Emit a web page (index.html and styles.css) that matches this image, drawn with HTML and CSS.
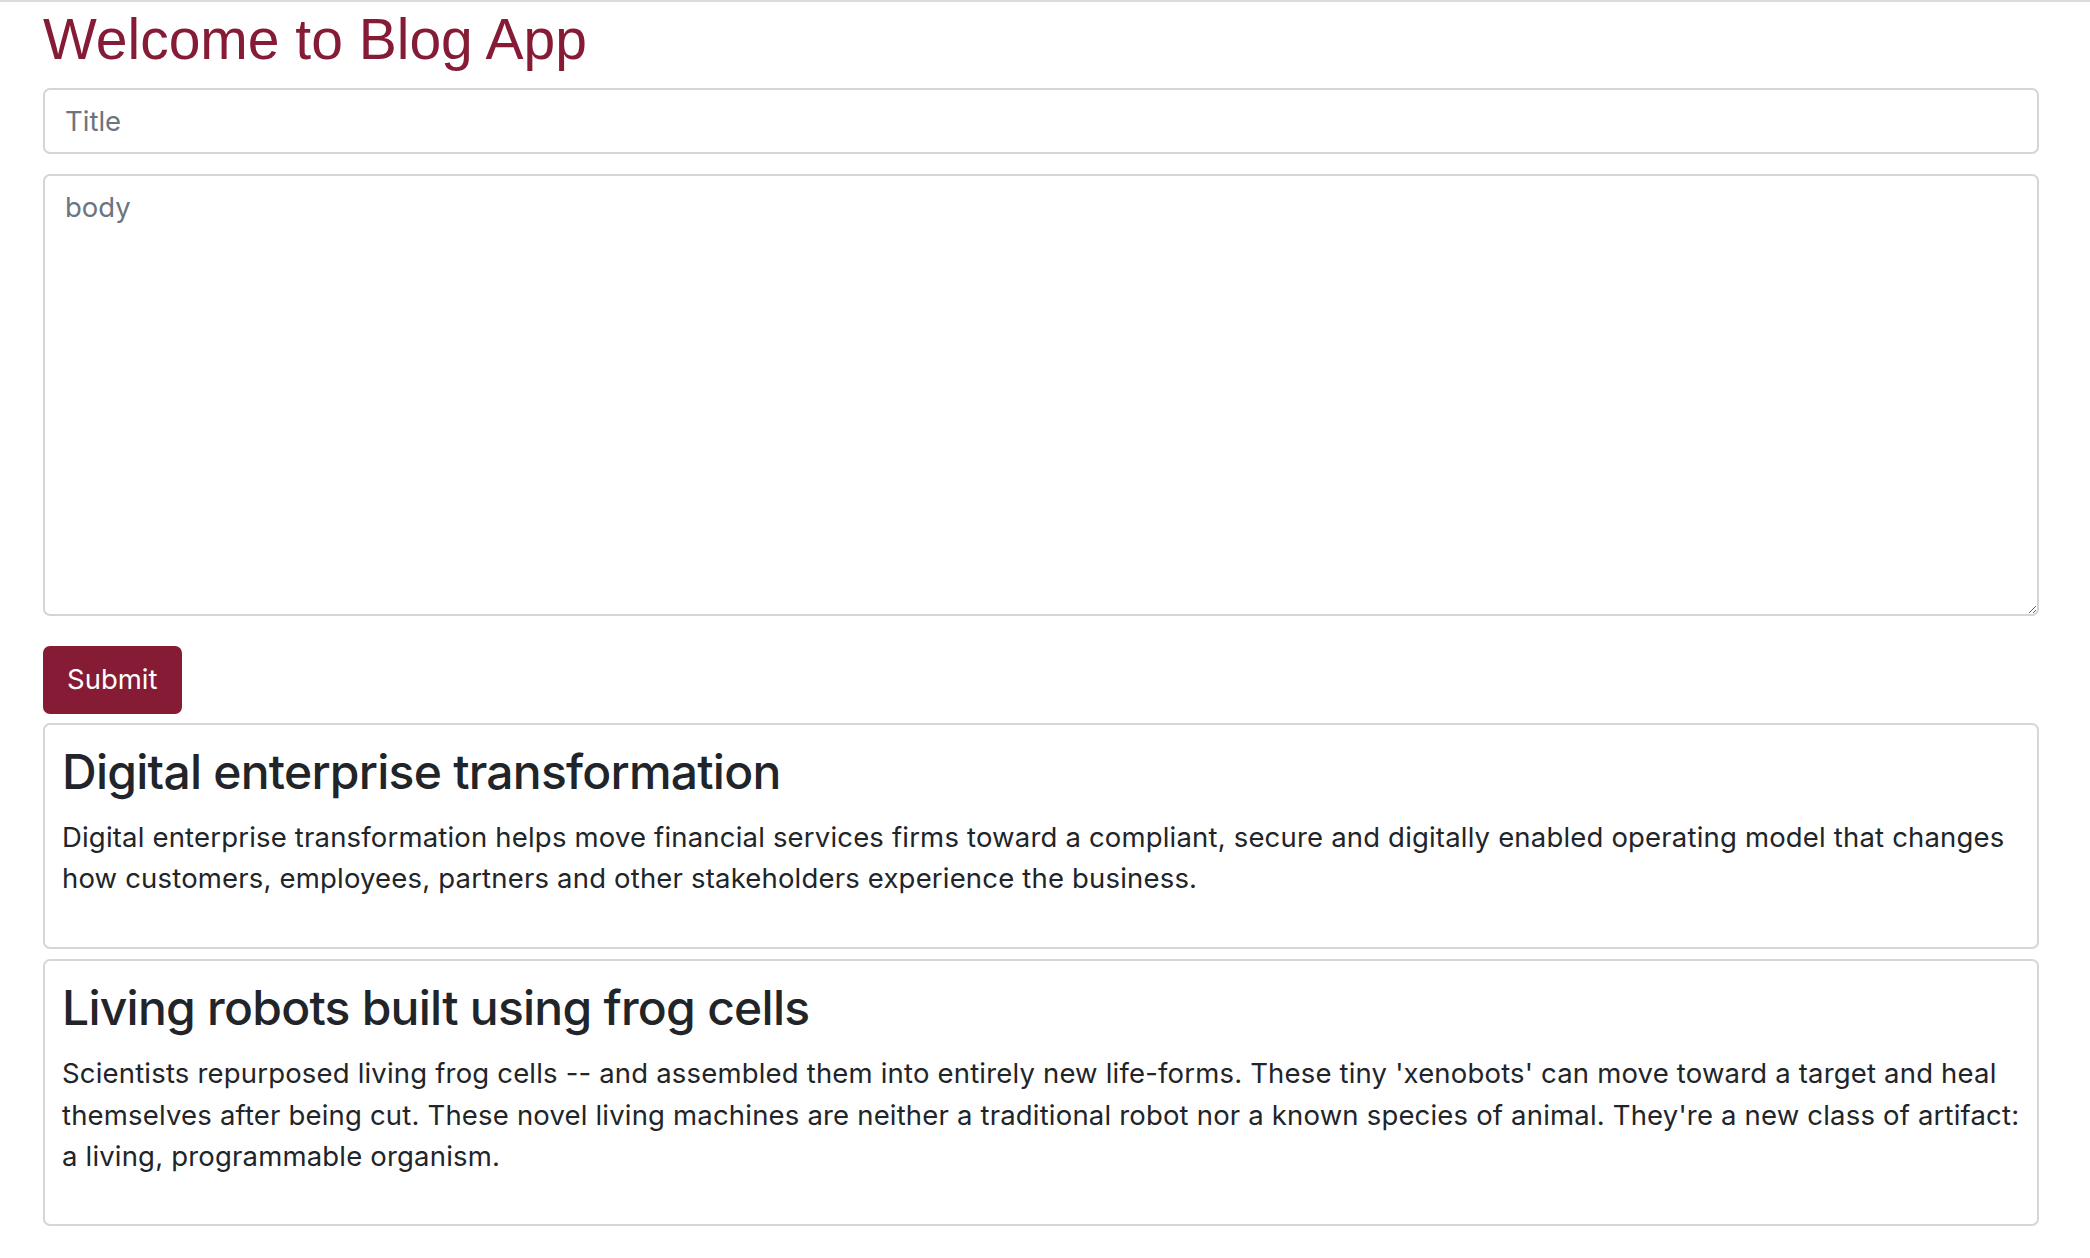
FILE: index.html
```html
<!DOCTYPE html>
<html lang="en">
<head>
  <meta charset="utf-8" />
  <meta name="viewport" content="width=device-width, initial-scale=1.0" />
  <title>Blog App</title>
  <link rel="stylesheet" href="styles.css">
</head>

<body>
  <div class="container">
    <h2 class="app-title">Welcome to Blog App</h2>

    <form class="post-form">
      <input type="text" class="form-control" name="title" placeholder="Title" />
      <textarea class="form-control body-input" name="body" placeholder="body"></textarea>
      <button type="button" class="btn-submit">Submit</button>
    </form>

    <div class="posts">
      <div class="card">
        <h3 class="card-title">Digital enterprise transformation</h3>
        <p class="card-text">Digital enterprise transformation helps move financial services firms toward a compliant, secure and digitally enabled operating model that changes how customers, employees, partners and other stakeholders experience the business.</p>
      </div>

      <div class="card">
        <h3 class="card-title">Living robots built using frog cells</h3>
        <p class="card-text">Scientists repurposed living frog cells -- and assembled them into entirely new life-forms. These tiny 'xenobots' can move toward a target and heal themselves after being cut. These novel living machines are neither a traditional robot nor a known species of animal. They're a new class of artifact: a living, programmable organism.</p>
      </div>
    </div>
  </div>
</body>
</html>
```

FILE: styles.css
```css
* {
  box-sizing: border-box;
}

body {
  margin: 0;
  border-top: 2px solid #dcdce0;
  font-family: Inter, "Noto Sans", sans-serif;
  font-size: 27.5px;
  line-height: 1.5;
  color: #212529;
  background: #fff;
}

.container {
  padding: 3px 51px 0 43px;
}

.app-title {
  margin: 0 0 15px;
  font-family: "Liberation Sans", Arial, sans-serif;
  font-size: 57px;
  font-weight: 400;
  line-height: 1.2;
  color: #861b36;
}

.form-control {
  display: block;
  width: 100%;
  height: 66px;
  padding: 11px 20px;
  font-family: inherit;
  font-size: 27.5px;
  line-height: 1.5;
  color: #495057;
  background: #fff;
  border: 2px solid #d2d5d9;
  border-radius: 7px;
}

.form-control::placeholder {
  color: #6c757d;
}

.body-input {
  height: 442px;
  margin-top: 20px;
  resize: vertical;
}

.btn-submit {
  display: block;
  margin-top: 30px;
  padding: 11px 22px;
  font-family: inherit;
  font-size: 27.5px;
  line-height: 1.5;
  color: #fff;
  background: #861b36;
  border: 2px solid #861b36;
  border-radius: 7px;
}

.posts {
  margin-top: 9px;
}

.card {
  margin-bottom: 10px;
  padding: 18px 8px 20px 17px;
  border: 2px solid #d6d6d6;
  border-radius: 7px;
}

.card-title {
  margin: 0 0 17px;
  font-size: 48px;
  font-weight: 500;
  line-height: 1.2;
  letter-spacing: -0.75px;
}

.card-text {
  margin: 0 0 27px;
  letter-spacing: 0.18px;
}
```
